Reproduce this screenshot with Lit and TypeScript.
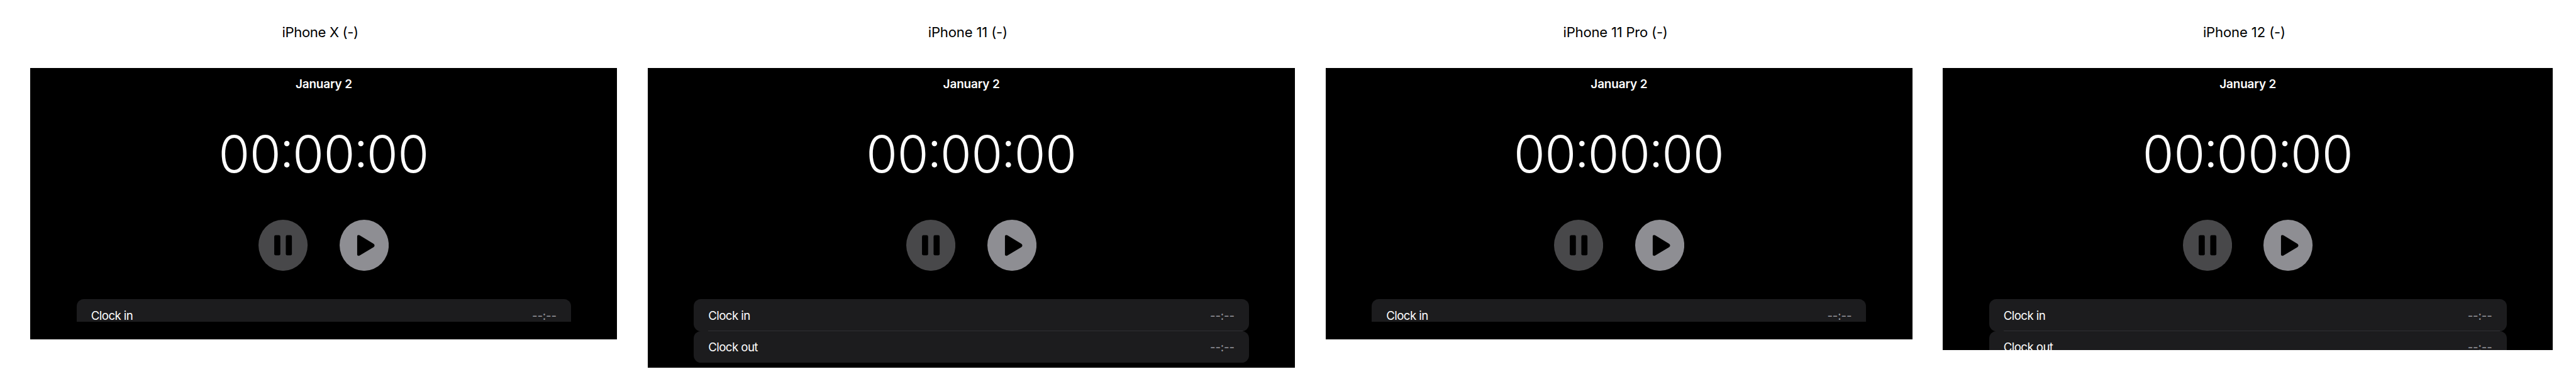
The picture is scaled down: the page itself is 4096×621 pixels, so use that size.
import { LitElement, html, css, svg } from "lit";
import { customElement, property } from "lit/decorators.js";

interface Device {
  name: string;
  tracking: number;
  width: number;
  height: number;
  listHeight: number;
  rows: string[];
}

const devices: Device[] = [
  { name: "iPhone X (-)", tracking: -0.6, width: 1624, height: 750, listHeight: 63, rows: ["Clock in"] },
  { name: "iPhone 11 (-)", tracking: -0.3, width: 1792, height: 828, listHeight: 176, rows: ["Clock in", "Clock out"] },
  { name: "iPhone 11 Pro (-)", tracking: -0.4, width: 1624, height: 750, listHeight: 63, rows: ["Clock in"] },
  { name: "iPhone 12 (-)", tracking: -0.25, width: 1688, height: 780, listHeight: 141, rows: ["Clock in", "Clock out"] },
];

const pauseGlyph = svg`
  <rect x="43.6" y="42.5" width="16.9" height="56" rx="4"></rect>
  <rect x="75.6" y="42.5" width="16.9" height="56" rx="4"></rect>`;

const playGlyph = svg`
  <path d="M48.6 46C48.6 42.2 52.2 41 55.6 43.1L94.2 66.4C97.6 68.8 97.6 73.2 94.2 75.6L55.6 98.6C52.2 100.9 48.6 99.6 48.6 95.8Z"></path>`;

@customElement("device-screen")
export class DeviceScreen extends LitElement {
  @property({ attribute: false }) device!: Device;

  static styles = css`
    :host {
      display: block;
      height: 100%;
      overflow: hidden;
      background: #000;
      color: #fff;
    }
    .screen {
      display: flex;
      flex-direction: column;
      align-items: center;
    }
    .title {
      box-sizing: border-box;
      height: calc(88 * var(--u));
      padding-top: calc(1 * var(--u));
      line-height: calc(88 * var(--u));
      font-size: calc(33 * var(--u));
      font-weight: 600;
      letter-spacing: calc(-0.3 * var(--u));
      white-space: nowrap;
    }
    .timer {
      margin-top: calc(65 * var(--u));
      height: calc(172 * var(--u));
      line-height: calc(172 * var(--u));
      font-size: calc(140 * var(--u));
      font-weight: 335;
      white-space: nowrap;
    }
    .colon {
      margin: 0 calc(-3.8 * var(--u));
      font-feature-settings: "case";
    }
    .controls {
      display: flex;
      gap: calc(88 * var(--u));
      margin-top: calc(93.7 * var(--u));
    }
    .button {
      display: block;
      width: calc(136 * var(--u));
      height: calc(141 * var(--u));
    }
    .disc {
      fill: #8e8e93;
    }
    .paused .disc {
      fill: #48484a;
    }
    .list {
      align-self: stretch;
      margin: calc(79.3 * var(--u)) calc(128 * var(--u)) 0;
      overflow: hidden;
    }
    .row {
      position: relative;
      display: flex;
      align-items: center;
      justify-content: space-between;
      box-sizing: border-box;
      height: calc(88 * var(--u));
      padding: calc(2 * var(--u)) calc(40 * var(--u)) 0;
      border-radius: calc(20 * var(--u));
      background: #1c1c1e;
      font-size: calc(32.5 * var(--u));
      letter-spacing: calc(-1 * var(--u));
      white-space: nowrap;
    }
    .row:not(:last-child)::after {
      content: "";
      position: absolute;
      left: calc(40 * var(--u));
      right: calc(18 * var(--u));
      bottom: 0;
      height: 1px;
      background: #303033;
    }
    .time {
      color: #98989f;
      letter-spacing: calc(-0.25 * var(--u));
    }
  `;

  render() {
    const d = this.device;
    const colon = html`<span class="colon">:</span>`;
    return html`
      <div class="screen">
        <div class="title">January 2</div>
        <div class="timer">00${colon}00${colon}00</div>
        <div class="controls">
          <svg class="button paused" viewBox="0 0 136 141">
            <ellipse class="disc" cx="68" cy="70.5" rx="68" ry="70.5"></ellipse>
            ${pauseGlyph}
          </svg>
          <svg class="button" viewBox="0 0 136 141">
            <ellipse class="disc" cx="68" cy="70.5" rx="68" ry="70.5"></ellipse>
            ${playGlyph}
          </svg>
        </div>
        <div class="list" style="height: calc(${d.listHeight} * var(--u))">
          ${d.rows.map(
            (label) => html`<div class="row"><span>${label}</span><span class="time">--:--</span></div>`,
          )}
        </div>
      </div>
    `;
  }
}

@customElement("app-root")
export class AppRoot extends LitElement {
  static styles = css`
    :host {
      --u: calc(100vw / 7128);
      display: block;
      box-sizing: border-box;
      height: 100vh;
      overflow: hidden;
      background: #fff;
      font-family: Inter, "Liberation Sans", sans-serif;
    }
    .board {
      display: flex;
      align-items: flex-start;
      gap: calc(84 * var(--u));
      padding-left: calc(84 * var(--u));
    }
    .device {
      flex: none;
    }
    .name {
      height: calc(188 * var(--u));
      line-height: calc(178 * var(--u));
      padding-right: calc(20 * var(--u));
      box-sizing: border-box;
      text-align: center;
      font-size: calc(38.5 * var(--u));
      color: #000;
      white-space: nowrap;
    }
  `;

  render() {
    return html`
      <div class="board">
        ${devices.map(
          (d) => html`
            <section class="device" style="width: calc(${d.width} * var(--u))">
              <div class="name" style="letter-spacing: calc(${d.tracking} * var(--u))">${d.name}</div>
              <div style="height: calc(${d.height} * var(--u))">
                <device-screen .device=${d}></device-screen>
              </div>
            </section>
          `,
        )}
      </div>
    `;
  }
}
